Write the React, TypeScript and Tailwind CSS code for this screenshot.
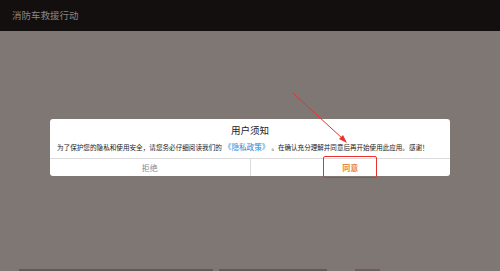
export default function App() {
  return (
    <div className="relative flex h-[271px] w-[500px] flex-col overflow-hidden bg-[#7f7774] font-['Noto_Sans_CJK_SC',sans-serif]">
      <div className="flex h-[31px] shrink-0 items-center bg-[#130f0f] pl-[12px]">
        <span className="text-[9.5px] leading-none text-[#8b8686]">消防车救援行动</span>
      </div>

      <div className="mx-[50px] mt-[88px] flex h-[57px] flex-col rounded-[3px] bg-white">
        <div className="flex h-[39px] flex-col">
          <div className="mt-[6px] text-center text-[9.5px] leading-[10px] text-[#222]">用户须知</div>
          <div className="mt-[7px] flex items-center whitespace-nowrap pl-[7px] leading-[10px] text-[#222]">
            <span className="text-[6.6px]">为了保护您的隐私和使用安全，请您务必仔细阅读我们的</span>
            <span className="ml-[2px] text-[7.6px] text-[#2a86d6]">《隐私政策》</span>
            <span className="ml-[2px] text-[6.55px]">。在确认充分理解并同意后再开始使用此应用。感谢！</span>
          </div>
        </div>
        <div className="flex flex-1 border-t border-[#dcdcdc]">
          <div className="flex flex-1 items-center justify-center text-[8px] text-[#8a8a8a]">拒绝</div>
          <div className="flex flex-1 items-center justify-center border-l border-[#dcdcdc] text-[8px] font-bold text-[#e8853f]">同意</div>
        </div>
      </div>

      <div className="mt-auto flex h-[2px] items-start">
        <div className="ml-[19px] h-[2px] w-[194px] bg-[#5f5a58]" />
        <div className="ml-[6px] h-[2px] w-[108px] bg-[#5f5a58]" />
        <div className="ml-[28px] h-[2px] w-[25px] bg-[#6b5e5a]" />
      </div>

      {/* annotation: red box + arrow */}
      <div className="absolute left-[323px] top-[156px] h-[22px] w-[54px] rounded-[2px] border-[1.5px] border-[#e8322f]" />
      <svg className="absolute left-0 top-0" width="500" height="271" viewBox="0 0 500 271">
        <line x1="293" y1="93" x2="343" y2="139" stroke="#e8322f" strokeWidth="1" />
        <polygon points="347,143 339,139 343,135" fill="#e8322f" />
      </svg>
    </div>
  )
}
